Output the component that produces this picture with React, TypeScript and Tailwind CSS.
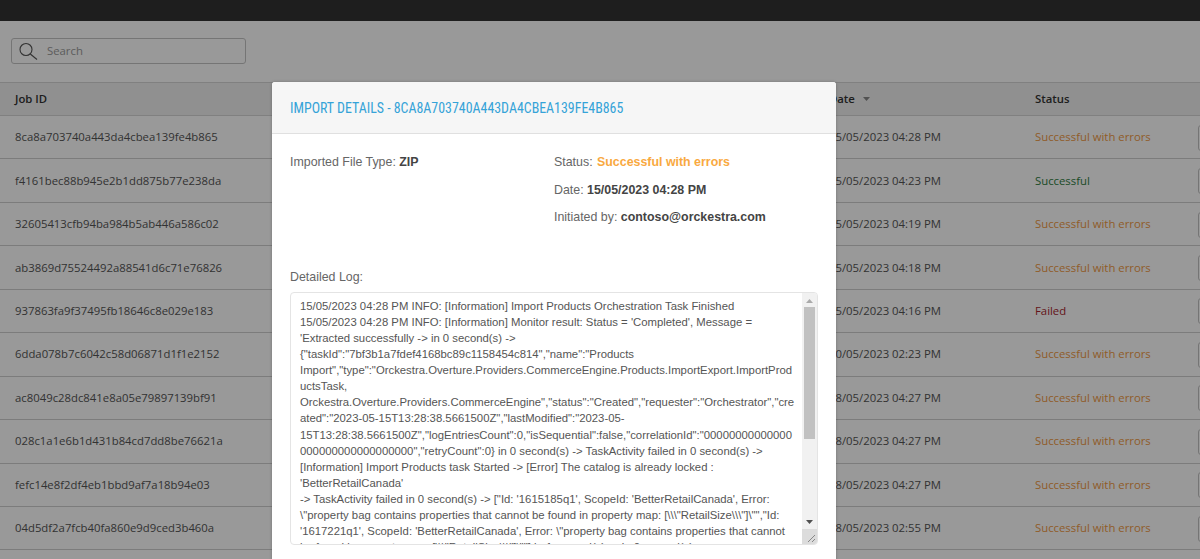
const rows = [
  ["8ca8a703740a443da4cbea139fe4b865", "15/05/2023 04:28 PM", "Successful with errors"],
  ["f4161bec88b945e2b1dd875b77e238da", "15/05/2023 04:23 PM", "Successful"],
  ["32605413cfb94ba984b5ab446a586c02", "15/05/2023 04:19 PM", "Successful with errors"],
  ["ab3869d75524492a88541d6c71e76826", "15/05/2023 04:18 PM", "Successful with errors"],
  ["937863fa9f37495fb18646c8e029e183", "15/05/2023 04:16 PM", "Failed"],
  ["6dda078b7c6042c58d06871d1f1e2152", "10/05/2023 02:23 PM", "Successful with errors"],
  ["ac8049c28dc841e8a05e79897139bf91", "08/05/2023 04:27 PM", "Successful with errors"],
  ["028c1a1e6b1d431b84cd7dd8be76621a", "08/05/2023 04:27 PM", "Successful with errors"],
  ["fefc14e8f2df4eb1bbd9af7a18b94e03", "08/05/2023 04:27 PM", "Successful with errors"],
  ["04d5df2a7fcb40fa860e9d9ced3b460a", "08/05/2023 02:55 PM", "Successful with errors"],
];

const logLines = [
  "15/05/2023 04:28 PM INFO: [Information] Import Products Orchestration Task Finished",
  "15/05/2023 04:28 PM INFO: [Information] Monitor result: Status = 'Completed', Message =",
  "'Extracted successfully -> in 0 second(s) ->",
  '{"taskId":"7bf3b1a7fdef4168bc89c1158454c814","name":"Products',
  'Import","type":"Orckestra.Overture.Providers.CommerceEngine.Products.ImportExport.ImportProd',
  "uctsTask,",
  'Orckestra.Overture.Providers.CommerceEngine","status":"Created","requester":"Orchestrator","cre',
  'ated":"2023-05-15T13:28:38.5661500Z","lastModified":"2023-05-',
  '15T13:28:38.5661500Z","logEntriesCount":0,"isSequential":false,"correlationId":"00000000000000',
  '000000000000000000","retryCount":0} in 0 second(s) -> TaskActivity failed in 0 second(s) ->',
  "[Information] Import Products task Started -> [Error] The catalog is already locked :",
  "'BetterRetailCanada'",
  "-> TaskActivity failed in 0 second(s) -> [\"Id: '1615185q1', ScopeId: 'BetterRetailCanada', Error:",
  '\\"property bag contains properties that cannot be found in property map: [\\\\\\"RetailSize\\\\\\"]\\"","Id:',
  "'1617221q1', ScopeId: 'BetterRetailCanada', Error: \\\"property bag contains properties that cannot",
  'be found in property map: [\\\\\\"RetailSize\\\\\\"]\\""] in 1 second(s) -> in 0 second(s) ->',
];

function statusClass(s: string) {
  if (s === "Successful") return "text-[#2f7d3f]";
  if (s === "Failed") return "text-[#a81f2e]";
  return "text-[#f09a45]";
}

export default function App() {
  return (
    <div className="relative h-[559px] w-[1200px] overflow-hidden bg-white font-['Open_Sans',sans-serif] text-[11.33px] text-[#555]">
      <div className="h-[21px] bg-[#323232]" />
      <div className="px-[11px] pt-[17px] pb-[18px]">
        <div className="flex h-[26px] w-[235px] items-center rounded-[3px] border border-[#c4c4c4] bg-white pt-[1px]">
          <svg width="20" height="20" viewBox="0 0 20 20" fill="none" stroke="#555" strokeWidth="1.1" className="mb-[1px] ml-[7px] mr-[8px] shrink-0">
            <circle cx="7" cy="8.5" r="6" />
            <path d="M11.3 13 L18 18.5" />
          </svg>
          <span className="text-[#9a9a9a]">Search</span>
        </div>
      </div>
      <div className="flex h-[34px] items-center border-y border-[#d5d5d5] bg-[#f0f0f0] pt-[1px] font-semibold text-[#333]">
        <span className="w-[829px] pl-[15px]">Job ID</span>
        <span className="flex w-[206px] items-center">
          Date
          <svg width="7" height="4" viewBox="0 0 7 4" className="ml-[8px]"><path d="M0 0H7L3.5 4Z" fill="#888" /></svg>
        </span>
        <span>Status</span>
      </div>
      {rows.map((r) => (
        <div key={r[0]} className="flex h-[43.45px] items-center border-b border-[#cfcfcf] pt-[1px]">
          <span className="w-[829px] pl-[15px]">{r[0]}</span>
          <span className="w-[206px]">{r[1]}</span>
          <span className={`grow ${statusClass(r[2])}`}>{r[2]}</span>
          <span className="mr-[-8px] h-[26px] w-[10px] rounded-l-[3px] border border-[#c4c4c4]" />
        </div>
      ))}

      <div className="absolute inset-0 bg-black/40" />

      <div className="absolute left-[272px] top-[82px] h-[520px] w-[564px] rounded-[3px] bg-white font-['Liberation_Sans',sans-serif] text-[12.4px] text-[#666] shadow-[0_0_3px_rgba(0,0,0,0.25)]">
        <div className="flex h-[52px] items-center rounded-t-[3px] border-b border-[#e0e0e0] bg-[#f6f6f6] pl-[18px] pt-[2px] font-['Roboto',sans-serif] text-[13.9px] text-[#35a3d8] [font-stretch:75%]">
          IMPORT DETAILS - 8CA8A703740A443DA4CBEA139FE4B865
        </div>
        <div className="flex h-[135px] pl-[18px] pt-[20px] leading-[16px]">
          <div className="w-[264px]">
            Imported File Type: <b className="text-[#444]">ZIP</b>
          </div>
          <div className="flex flex-col gap-[11.5px]">
            <div>Status: <b className="ml-[1px] text-[#f9a93f]">Successful with errors</b></div>
            <div>Date: <b className="text-[#444]">15/05/2023 04:28 PM</b></div>
            <div>Initiated by: <b className="text-[#444]">contoso@orckestra.com</b></div>
          </div>
        </div>
        <div className="pl-[18px] leading-[16px]">Detailed Log:</div>
        <div className="relative ml-[18px] mt-[7px] h-[253px] w-[528px] overflow-hidden rounded-[4px] border border-[#e4e4e4] bg-white pl-[9px] pt-[5px] text-[11.33px] text-[#555]">
          {logLines.map((l, i) => (
            <div key={i} className="h-[16.07px] whitespace-pre leading-[16px]">{l}</div>
          ))}
          <div className="absolute right-0 top-0 flex h-full w-[15px] flex-col items-center bg-[#f1f1f1]">
            <svg width="7" height="4" viewBox="0 0 7 4" className="mt-[6px]"><path d="M3.5 0L7 4H0Z" fill="#aaa" /></svg>
            <div className="mt-[4px] h-[132px] w-[11px] bg-[#c1c1c1]" />
            <div className="grow" />
            <svg width="7" height="4" viewBox="0 0 7 4" className="mb-[20px]"><path d="M0 0H7L3.5 4Z" fill="#505050" /></svg>
            <div className="absolute bottom-0 right-0 h-[15px] w-[15px] bg-[#dcdcdc]">
              <svg width="15" height="15" viewBox="0 0 15 15" stroke="#888" fill="none"><path d="M13 6L6 13M13 10L10 13" /></svg>
            </div>
          </div>
        </div>
      </div>
    </div>
  );
}
